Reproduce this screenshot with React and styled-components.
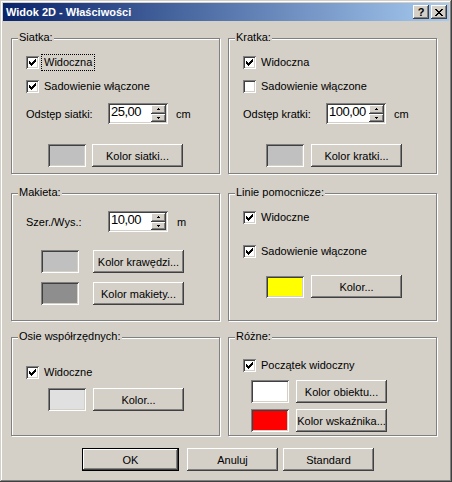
import React from 'react';
import styled, { createGlobalStyle } from 'styled-components';

const FACE = '#d4d0c8';

const raised = `box-shadow: inset -1px -1px #404040, inset 1px 1px #fff, inset -2px -2px #808080, inset 2px 2px ${FACE};`;
const sunken = `box-shadow: inset 1px 1px #808080, inset -1px -1px #fff, inset 2px 2px #404040, inset -2px -2px ${FACE};`;

const GlobalStyle = createGlobalStyle`
  html, body { margin: 0; padding: 0; background: ${FACE}; }
  body {
    font-family: "Liberation Sans", Arial, sans-serif;
    font-size: 11px;
    color: #000;
  }
`;

const Window = styled.div`
  width: 452px;
  height: 482px;
  box-sizing: border-box;
  padding: 3px;
  background: ${FACE};
  box-shadow: inset -1px -1px #404040, inset 1px 1px ${FACE}, inset -2px -2px #808080, inset 2px 2px #fff;
  display: flex;
  flex-direction: column;
`;

const TitleBar = styled.div`
  height: 18px;
  display: flex;
  align-items: center;
  padding: 0 2px 0 3px;
  background: linear-gradient(to right, #0a246a, #a6caf0);
`;

const TitleText = styled.div`
  flex: 1;
  color: #fff;
  font-weight: bold;
  font-size: 11px;
  line-height: 18px;
  white-space: nowrap;
`;

const CaptionButton = styled.div`
  width: 16px;
  height: 14px;
  margin-left: ${p => p.$ml || 0}px;
  background: ${FACE};
  ${raised}
  display: flex;
  align-items: center;
  justify-content: center;
  font-weight: bold;
  font-size: 11px;
  line-height: 14px;
`;

const Body = styled.div`
  padding: 17px 0 0 8px;
`;

const Grid = styled.div`
  display: grid;
  grid-template-columns: 209px 209px;
  column-gap: 8px;
  align-items: start;
`;

const Group = styled.div`
  position: relative;
  box-sizing: border-box;
  height: ${p => p.$h}px;
  margin-top: ${p => p.$mt || 0}px;
  border: 1px solid #808080;
  box-shadow: inset 1px 1px #fff, 1px 1px #fff;
`;

const Legend = styled.div`
  position: absolute;
  top: -8px;
  left: 6px;
  padding: 0 1px;
  background: ${FACE};
  line-height: 13px;
  white-space: nowrap;
`;

const Row = styled.div`
  display: flex;
  align-items: center;
  height: ${p => p.$h || 13}px;
  margin: ${p => p.$mt || 0}px 0 0 ${p => p.$ml || 0}px;
`;

const Box = styled.div`
  position: relative;
  flex: none;
  width: 13px;
  height: 13px;
  background: #fff;
  ${sunken}
  svg { position: absolute; left: 3px; top: 3px; }
`;

const CheckLabel = styled.span`
  margin-left: 4px;
  padding: 0 1px;
  line-height: 13px;
  white-space: nowrap;
  outline: ${p => (p.$focus ? '1px dotted #000' : 'none')};
  outline-offset: 1px;
`;

const FieldLabel = styled.span`
  width: ${p => p.$w}px;
  flex: none;
  line-height: 13px;
  padding-top: 2px;
  white-space: nowrap;
`;

const SpinBox = styled.div`
  display: flex;
  width: 60px;
  height: 21px;
  box-sizing: border-box;
  padding: 2px;
  background: #fff;
  ${sunken}
`;

const SpinText = styled.div`
  flex: 1;
  padding-left: 1px;
  font-size: 13px;
  letter-spacing: -0.5px;
  line-height: 14px;
`;

const SpinButtons = styled.div`
  width: 15px;
  display: flex;
  flex-direction: column;
`;

const SpinButton = styled.div`
  flex: 1;
  background: ${FACE};
  ${raised}
  display: flex;
  align-items: center;
  justify-content: center;
`;

const Unit = styled.span`
  margin-left: ${p => p.$ml}px;
  padding-top: 2px;
  line-height: 13px;
`;

const Swatch = styled.div`
  flex: none;
  width: 38px;
  height: ${p => p.$h || 23}px;
  margin-left: ${p => p.$ml}px;
  box-sizing: border-box;
  background: ${p => p.$c};
  ${sunken}
`;

const Button = styled.button`
  flex: none;
  width: ${p => p.$w || 91}px;
  height: 23px;
  margin-left: ${p => p.$ml || 0}px;
  padding: 0;
  box-sizing: border-box;
  border: ${p => (p.$default ? '1px solid #000' : 'none')};
  background: ${FACE};
  ${raised}
  font-family: inherit;
  font-size: 11px;
  color: #000;
  white-space: nowrap;
`;

const Footer = styled.div`
  display: flex;
  margin-top: 12px;
  padding-left: 71px;
`;

const Tick = () => (
  <svg width="7" height="7" viewBox="0 0 7 7" shapeRendering="crispEdges">
    <path
      fill="#000"
      d="M6 0h1v1h-1z M5 1h2v1h-2z M0 2h1v1h-1z M4 2h3v1h-3z M0 3h2v1h-2z M3 3h3v1h-3z M0 4h5v1h-5z M1 5h3v1h-3z M2 6h1v1h-1z"
    />
  </svg>
);

const Arrow = ({ down }) => (
  <svg width="3" height="2" viewBox="0 0 3 2" shapeRendering="crispEdges">
    <path fill="#000" d={down ? 'M0 0h3v1h-3z M1 1h1v1h-1z' : 'M1 0h1v1h-1z M0 1h3v1h-3z'} />
  </svg>
);

const Check = ({ checked, focus, label, mt, ml = 14 }) => (
  <Row $mt={mt} $ml={ml}>
    <Box>{checked && <Tick />}</Box>
    <CheckLabel $focus={focus}>{label}</CheckLabel>
  </Row>
);

const Spin = ({ label, value, unit, mt, lw, uml = 8 }) => (
  <Row $h={21} $mt={mt} $ml={14}>
    <FieldLabel $w={lw}>{label}</FieldLabel>
    <SpinBox>
      <SpinText>{value}</SpinText>
      <SpinButtons>
        <SpinButton><Arrow /></SpinButton>
        <SpinButton><Arrow down /></SpinButton>
      </SpinButtons>
    </SpinBox>
    <Unit $ml={uml}>{unit}</Unit>
  </Row>
);

const ColorRow = ({ color, label, mt, sml, bml, h }) => (
  <Row $h={23} $mt={mt}>
    <Swatch $c={color} $ml={sml} $h={h} />
    <Button $ml={bml}>{label}</Button>
  </Row>
);

export default function App() {
  return (
    <>
      <GlobalStyle />
      <Window>
        <TitleBar>
          <TitleText>Widok 2D - Właściwości</TitleText>
          <CaptionButton>?</CaptionButton>
          <CaptionButton $ml={2}>
            <svg width="8" height="7" viewBox="0 0 8 7" shapeRendering="crispEdges">
              <path
                fill="#000"
                d="M0 0h2v1h-2z M6 0h2v1h-2z M1 1h2v1h-2z M5 1h2v1h-2z M2 2h4v1h-4z M3 3h2v1h-2z M2 4h4v1h-4z M1 5h2v1h-2z M5 5h2v1h-2z M0 6h2v1h-2z M6 6h2v1h-2z"
              />
            </svg>
          </CaptionButton>
        </TitleBar>
        <Body>
          <Grid>
            <Group $h={136}>
              <Legend>Siatka:</Legend>
              <Check checked focus label="Widoczna" mt={17} />
              <Check checked label="Sadowienie włączone" mt={11} />
              <Spin label="Odstęp siatki:" value="25,00" unit="cm" mt={10} lw={82} />
              <ColorRow color="#c0c0c0" label="Kolor siatki..." mt={20} sml={36} bml={6} />
            </Group>
            <Group $h={136}>
              <Legend>Kratka:</Legend>
              <Check checked label="Widoczna" mt={17} />
              <Check label="Sadowienie włączone" mt={11} />
              <Spin label="Odstęp kratki:" value="100,00" unit="cm" mt={10} lw={83} />
              <ColorRow color="#c0c0c0" label="Kolor kratki..." mt={20} sml={37} bml={7} />
            </Group>

            <Group $h={128} $mt={19}>
              <Legend>Makieta:</Legend>
              <Spin label="Szer./Wys.:" value="10,00" unit="m" mt={17} lw={82} uml={9} />
              <ColorRow color="#c0c0c0" label="Kolor krawędzi..." mt={18} sml={29} bml={14} />
              <ColorRow color="#8e8e8e" label="Kolor makiety..." mt={9} sml={29} bml={14} />
            </Group>
            <Group $h={128} $mt={19}>
              <Legend>Linie pomocnicze:</Legend>
              <Check checked label="Widoczne" mt={17} />
              <Check checked label="Sadowienie włączone" mt={21} />
              <ColorRow color="#ffff00" label="Kolor..." mt={17} sml={37} bml={7} h={22} />
            </Group>

            <Group $h={99} $mt={16}>
              <Legend>Osie współrzędnych:</Legend>
              <Check checked label="Widoczne" mt={28} />
              <ColorRow color="#e0e0e0" label="Kolor..." mt={9} sml={36} bml={7} />
            </Group>
            <Group $h={99} $mt={16}>
              <Legend>Różne:</Legend>
              <Check checked label="Początek widoczny" mt={21} />
              <ColorRow color="#ffffff" label="Kolor obiektu..." mt={8} sml={22} bml={7} />
              <ColorRow color="#ff0000" label="Kolor wskaźnika..." mt={6} sml={22} bml={7} />
            </Group>
          </Grid>
          <Footer>
            <Button $default $w={97}>OK</Button>
            <Button $ml={8}>Anuluj</Button>
            <Button $ml={5}>Standard</Button>
          </Footer>
        </Body>
      </Window>
    </>
  );
}
